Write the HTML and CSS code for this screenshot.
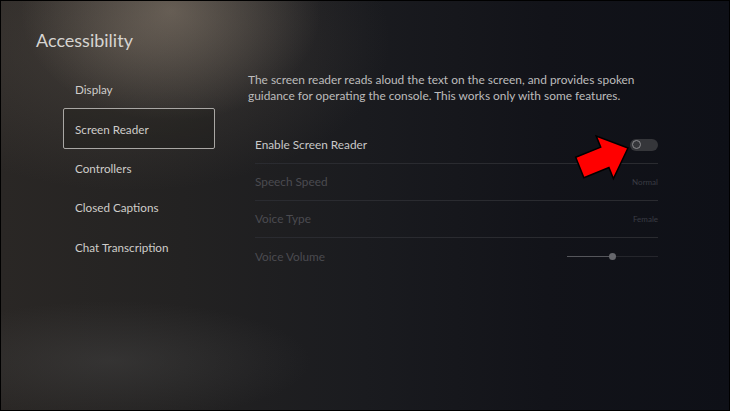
FILE: index.html
```html
<!DOCTYPE html>
<html lang="en">
<head>
    <meta charset="UTF-8">
    <meta name="viewport" content="width=device-width, initial-scale=1.0">
    <title>Accessibility - Screen Reader</title>
    <link rel="stylesheet" href="styles.css">
</head>
<body>
    <div class="screen">
        <h1 class="title">Accessibility</h1>
        <div class="main">
            <nav class="menu" aria-label="Accessibility">
                <a class="menu-item" href="#">Display</a>
                <a class="menu-item selected" href="#" aria-current="page">Screen Reader</a>
                <a class="menu-item" href="#">Controllers</a>
                <a class="menu-item" href="#">Closed Captions</a>
                <a class="menu-item" href="#">Chat Transcription</a>
            </nav>
            <section class="panel">
                <p class="desc">The screen reader reads aloud the text on the screen, and provides spoken guidance for operating the console. This works only with some features.</p>
                <ul class="settings">
                    <li class="setting">
                        <span class="label">Enable Screen Reader</span>
                        <span class="toggle" role="switch" aria-checked="false"><span class="knob"></span></span>
                    </li>
                    <li class="setting disabled">
                        <span class="label">Speech Speed</span>
                        <span class="value">Normal</span>
                    </li>
                    <li class="setting disabled">
                        <span class="label">Voice Type</span>
                        <span class="value">Female</span>
                    </li>
                    <li class="setting disabled">
                        <span class="label">Voice Volume</span>
                        <span class="slider"><span class="fill"></span><span class="thumb"></span></span>
                    </li>
                </ul>
            </section>
        </div>

        <!-- red annotation arrow pointing at the toggle -->
        <svg class="pointer" width="70" height="60" viewBox="0 0 70 60" aria-hidden="true">
            <g transform="translate(57 19) rotate(-22)">
                <polygon points="0,0 -25,-23 -25,-11 -52,-11 -52,11 -25,11 -25,23"
                         fill="#ff0000" stroke="#000" stroke-width="1.5" stroke-linejoin="miter"/>
            </g>
        </svg>
    </div>
</body>
</html>
```

FILE: styles.css
```css
* {
    box-sizing: border-box;
}

body {
    margin: 0;
    padding: 0;
    background-color: #000;
    font-family: Lato, "Open Sans", Arial, sans-serif;
}

/* Whole console screen */
.screen {
    position: relative;
    width: 730px;
    height: 411px;
    border: 1px solid #000;
    padding: 28px 0 0 35px;
    overflow: hidden;
    background:
        radial-gradient(ellipse 150px 110px at 170px 10px, rgba(160, 145, 128, 0.45), rgba(160, 145, 128, 0) 100%),
        radial-gradient(ellipse 260px 150px at 130px 40px, rgba(110, 100, 90, 0.35), rgba(110, 100, 90, 0) 100%),
        radial-gradient(ellipse 200px 60px at 110px 360px, rgba(80, 80, 80, 0.35), rgba(80, 80, 80, 0) 100%),
        linear-gradient(90deg, #2a2725 0%, #232222 25%, #1a1b1f 50%, #121319 75%, #0e1017 100%);
}

.title {
    margin: 0 0 18px;
    font-size: 18px;
    line-height: 22px;
    font-weight: 400;
    color: #d6d4d1;
}

.main {
    display: flex;
    gap: 33px;
}

/* Left menu */
.menu {
    display: flex;
    flex-direction: column;
    width: 152px;
    margin-left: 27px;
}

.menu-item {
    display: flex;
    align-items: center;
    height: 39.5px;
    padding-left: 11px;
    border: 1.5px solid transparent;
    border-radius: 2px;
    color: #cfcdca;
    font-size: 11.7px;
    text-decoration: none;
}

.menu-item.selected {
    height: 41px;
    margin: -0.5px 0 -1px;
    border-color: #a9a7a4;
    background-color: rgba(20, 18, 17, 0.25);
}

/* Right panel */
.panel {
    padding-top: 3px;
    width: 412px;
}

.desc {
    margin: 0 0 23px;
    font-size: 11.9px;
    line-height: 16px;
    color: #bdbcbc;
}

.settings {
    list-style: none;
    margin: 0 0 0 7px;
    padding: 0;
    width: 403px;
}

.setting {
    display: flex;
    align-items: center;
    justify-content: space-between;
    height: 37px;
    padding-bottom: 1px;
    border-bottom: 1px solid #2a2b30;
    font-size: 11.8px;
}

.setting:last-child {
    border-bottom: none;
}

.label {
    color: #c9c9c9;
}

.setting.disabled .label {
    color: #4b4b50;
}

.value {
    font-size: 8px;
    color: #3a3c44;
}

.toggle {
    position: relative;
    width: 28px;
    height: 12px;
    border-radius: 6px;
    background-color: #35363a;
}

.knob {
    position: absolute;
    left: 2px;
    top: 1.5px;
    width: 9px;
    height: 9px;
    border-radius: 50%;
    border: 1.5px solid #8c8c8f;
}

.slider {
    position: relative;
    width: 91px;
    height: 1px;
    background-color: #25262c;
}

.fill {
    position: absolute;
    left: 0;
    top: 0;
    width: 45px;
    height: 1px;
    background-color: #55565b;
}

.thumb {
    position: absolute;
    left: 42px;
    top: -3px;
    width: 7px;
    height: 7px;
    border-radius: 50%;
    background-color: #66676c;
}

/* Annotation overlay */
.pointer {
    position: absolute;
    left: 570px;
    top: 128px;
}
```
